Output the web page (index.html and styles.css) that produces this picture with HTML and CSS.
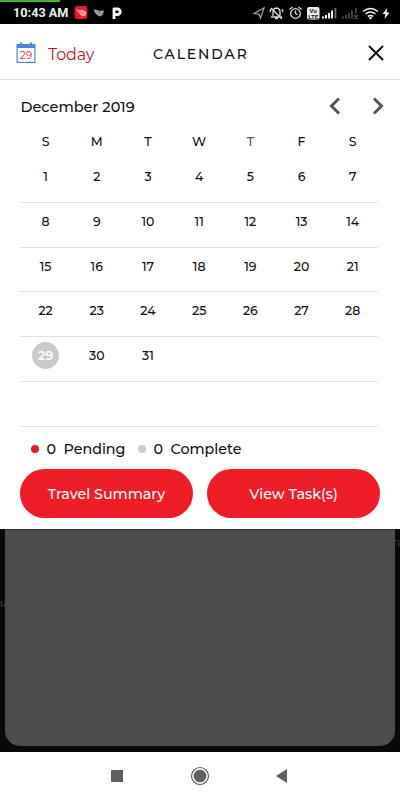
FILE: index.html
```html
<!DOCTYPE html>
<html lang="en">
<head>
    <meta charset="UTF-8">
    <meta name="viewport" content="width=device-width, initial-scale=1.0">
    <title>Calendar</title>
    <link rel="stylesheet" href="styles.css">
</head>
<body>
    <div class="status-bar">
        <div class="progress"></div>
        <span class="clock">10:43 AM</span>
        <svg class="notifications" width="50" height="16" viewBox="0 0 50 16">
            <rect x="0.500" y="1" width="13" height="13" rx="3" fill="#e31b2e"/>
            <path d="M2 4.500l4 .5 2-.5 4.500 2.500-1 3.500-3 1-3-2.500z" fill="#f3a9ae"/>
            <path d="M4 5.500l5 4.500M6.500 5l4 4" stroke="#d83545" stroke-width=".6"/>
            <path d="M19.500 4.500l4 .5 2 1 4.500-.5-1.500 4.500-3 1.500-4-3z" fill="#aaa"/>
            <path d="M22 6l5 4M24.500 6l4 3" stroke="#555" stroke-width=".6"/>
            <path d="M40 14V4h3.500a2.700 2.700 0 0 1 0 5.500H41" fill="none" stroke="#fff" stroke-width="2.800" stroke-linejoin="round"/>
        </svg>
        <svg class="system" width="138" height="16" viewBox="0 0 138 16">
            <g fill="none" stroke="#ddd" stroke-width="1.300">
                <path d="M1 8.500L11 3 7.500 13 6 9z" stroke="#999"/>
                <path d="M18 12h11M20 11V7q0-3.500 3.500-4 3.500.5 3.500 4v4M22 13.500h3M18 3l11 11M17 7l1-3M30 7l-1-3"/>
                <circle cx="42.500" cy="8.500" r="4.800"/>
                <path d="M42.500 5.500v3l2 1.300M36.500 4.500l3-2.500M48.500 4.500l-3-2.500"/>
            </g>
            <rect x="54" y="2" width="12.500" height="12.500" rx="2" fill="#eee"/>
            <text x="60.200" y="8" class="volte">Vo</text>
            <text x="60.200" y="13.500" class="volte">LTE</text>
            <path d="M70 13.500v-2M73 13.500V10M76 13.500V8M79 13.500V5.500" stroke="#eee" stroke-width="2"/>
            <path d="M82.500 13.500V3" stroke="#777" stroke-width="1.700"/>
            <path d="M90 13.500v-2M93 13.500V10M96 13.500V8M99 13.500V5.500M103 8.500V3M101 10l4 4M105 10l-4 4" stroke="#555" stroke-width="1.500"/>
            <g fill="none" stroke="#eee" stroke-width="1.600">
                <path d="M110 6.500q7.500-6 15 0M112.500 9q5-4 10 0M114.800 11.500q2.700-2 5.400 0"/>
            </g>
            <circle cx="117.500" cy="13" r="1.300" fill="#eee"/>
            <path d="M134.500 3l-5 6h3l-1 5 5-6.500h-3z" fill="#fff"/>
        </svg>
    </div>

    <div class="header">
        <svg class="day-icon" width="20" height="22" viewBox="0 0 20 22">
            <path d="M0.500 2H4V0.500h2V2h8V0.500h2V2h3.500v19H.5z" fill="#4a87d6"/>
            <path d="M1.700 6h16.600v13.800H1.700z" fill="#fff"/>
            <text x="10" y="16.700" class="icon-day">29</text>
        </svg>
        <span class="today">Today</span>
        <h1>CALENDAR</h1>
        <svg class="close" width="16" height="16" viewBox="0 0 16 16">
            <path d="M1.500 1.500l13 13M14.500 1.500l-13 13" stroke="#0b0b14" stroke-width="1.900" stroke-linecap="round"/>
        </svg>
    </div>

    <div class="calendar">
        <div class="month-row">
            <span class="month">December 2019</span>
            <svg width="58" height="18" viewBox="0 0 58 18" fill="none" stroke="#555" stroke-width="3">
                <path d="M10 1.500L2.500 9l7.500 7.500M45 1.500L52.500 9 45 16.500"/>
            </svg>
        </div>
        <div class="week weekdays">
            <span>S</span><span>M</span><span>T</span><span>W</span><span class="light">T</span><span>F</span><span>S</span>
        </div>
        <div class="week"><span>1</span><span>2</span><span>3</span><span>4</span><span>5</span><span>6</span><span>7</span></div>
        <div class="week"><span>8</span><span>9</span><span>10</span><span>11</span><span>12</span><span>13</span><span>14</span></div>
        <div class="week"><span>15</span><span>16</span><span>17</span><span>18</span><span>19</span><span>20</span><span>21</span></div>
        <div class="week"><span>22</span><span>23</span><span>24</span><span>25</span><span>26</span><span>27</span><span>28</span></div>
        <div class="week"><span class="selected">29</span><span>30</span><span>31</span></div>
        <div class="week"></div>
        <div class="legend">
            <i class="dot pending"></i><span class="count">0</span><span class="pending-label">Pending</span>
            <i class="dot"></i><span class="count">0</span><span class="complete-label">Complete</span>
        </div>
        <div class="buttons">
            <button>Travel Summary</button>
            <button>View Task(s)</button>
        </div>
    </div>

    <div class="backdrop">
        <span class="behind behind-left">na</span>
        <span class="behind behind-right">ra</span>
        <div class="sheet"></div>
    </div>

    <div class="nav-bar">
        <svg width="180" height="20" viewBox="0 0 180 20" fill="#606060">
            <path d="M1 4h12v12H1z"/>
            <circle cx="90" cy="10" r="8.500" fill="none" stroke="#606060" stroke-width="1.200"/>
            <circle cx="90" cy="10" r="6.300"/>
            <path d="M166 10l11-7v14z"/>
        </svg>
    </div>
</body>
</html>
```

FILE: styles.css
```css
* {
    box-sizing: border-box;
}
body {
    margin: 0;
    width: 400px;
    height: 800px;
    display: flex;
    flex-direction: column;
    overflow: hidden;
    background: #fff;
    color: #111;
    font-family: Montserrat, Inter, sans-serif;
}
.status-bar {
    position: relative;
    height: 24px;
    padding: 1px 9px 0 13px;
    display: flex;
    align-items: center;
    background: #000;
}
.progress {
    position: absolute;
    top: 0;
    left: 0;
    width: 60px;
    height: 2px;
    background: #4caf28;
}
.clock {
    width: 61px;
    color: #eee;
    font: bold 12.7px Roboto, sans-serif;
    white-space: nowrap;
}
.system {
    margin-left: auto;
}
.volte {
    font: bold 6px Roboto, sans-serif;
    text-anchor: middle;
    fill: #111;
}
.header {
    height: 56px;
    padding: 3px 16px 0;
    display: flex;
    align-items: center;
    border-bottom: 1px solid #ddd;
}
.day-icon {
    margin-bottom: 1px;
}
.icon-day {
    font-size: 10.5px;
    text-anchor: middle;
    fill: #c43c48;
}
.today {
    width: 105px;
    margin-left: 12px;
    padding-top: 2px;
    color: #c41525;
    font-size: 16px;
    letter-spacing: -0.15px;
}
h1 {
    margin: 0;
    padding-top: 1px;
    font-size: 14px;
    font-weight: 500;
    letter-spacing: 1.85px;
}
.close {
    margin-left: auto;
    margin-bottom: 1px;
}
.calendar {
    height: 449px;
    padding: 14px 20px 0;
}
.month-row {
    height: 25px;
    display: flex;
    align-items: center;
    justify-content: space-between;
}
.month-row svg {
    margin-right: -7px;
    margin-bottom: 1px;
}
.month {
    padding-left: 0.5px;
    font-size: 14.5px;
    font-weight: 500;
}
.week {
    width: 358px;
    height: 44.8px;
    padding: 5px 0 0;
    display: grid;
    grid-template-columns: repeat(7, 51.2px);
    justify-items: center;
    border-bottom: 1px solid #e2e2e2;
    font-size: 12.5px;
    font-weight: 500;
    line-height: 27px;
}
.weekdays {
    height: 39px;
    padding-top: 9px;
    border: none;
}
.light {
    color: #555;
}
.selected {
    width: 27px;
    height: 27px;
    border-radius: 50%;
    background: #c9c9c9;
    color: #fff;
    font-weight: 600;
    text-align: center;
}
.legend {
    height: 42px;
    padding: 2px 0 0 10.5px;
    display: flex;
    align-items: center;
    font-size: 14.3px;
    font-weight: 500;
}
.dot {
    width: 8px;
    height: 8px;
    border-radius: 50%;
    background: #ccc;
}
.dot.pending {
    background: #e31e2b;
}
.count {
    width: 17px;
    margin-left: 8px;
}
.pending-label {
    width: 74px;
}
.buttons {
    display: flex;
    gap: 14px;
}
button {
    width: 173px;
    height: 49px;
    padding: 2px 0 0;
    border: none;
    border-radius: 25px;
    background: #ee1d28;
    color: #fff;
    font: 500 14.3px Montserrat, Inter, sans-serif;
}
.backdrop {
    position: relative;
    height: 223px;
    padding: 0 5px 6px;
    background: #090909;
    overflow: hidden;
}
.sheet {
    position: relative;
    height: 100%;
    border-top: 1px solid #333;
    border-radius: 0 0 15px 15px;
    background: #4c4c4c;
}
.behind {
    position: absolute;
    color: #4a4a4a;
    font-size: 12px;
}
.behind-left {
    top: 66px;
    left: -5px;
}
.behind-right {
    top: 5px;
    right: -4px;
}
.nav-bar {
    height: 48px;
    display: flex;
    align-items: center;
    justify-content: center;
}
```
